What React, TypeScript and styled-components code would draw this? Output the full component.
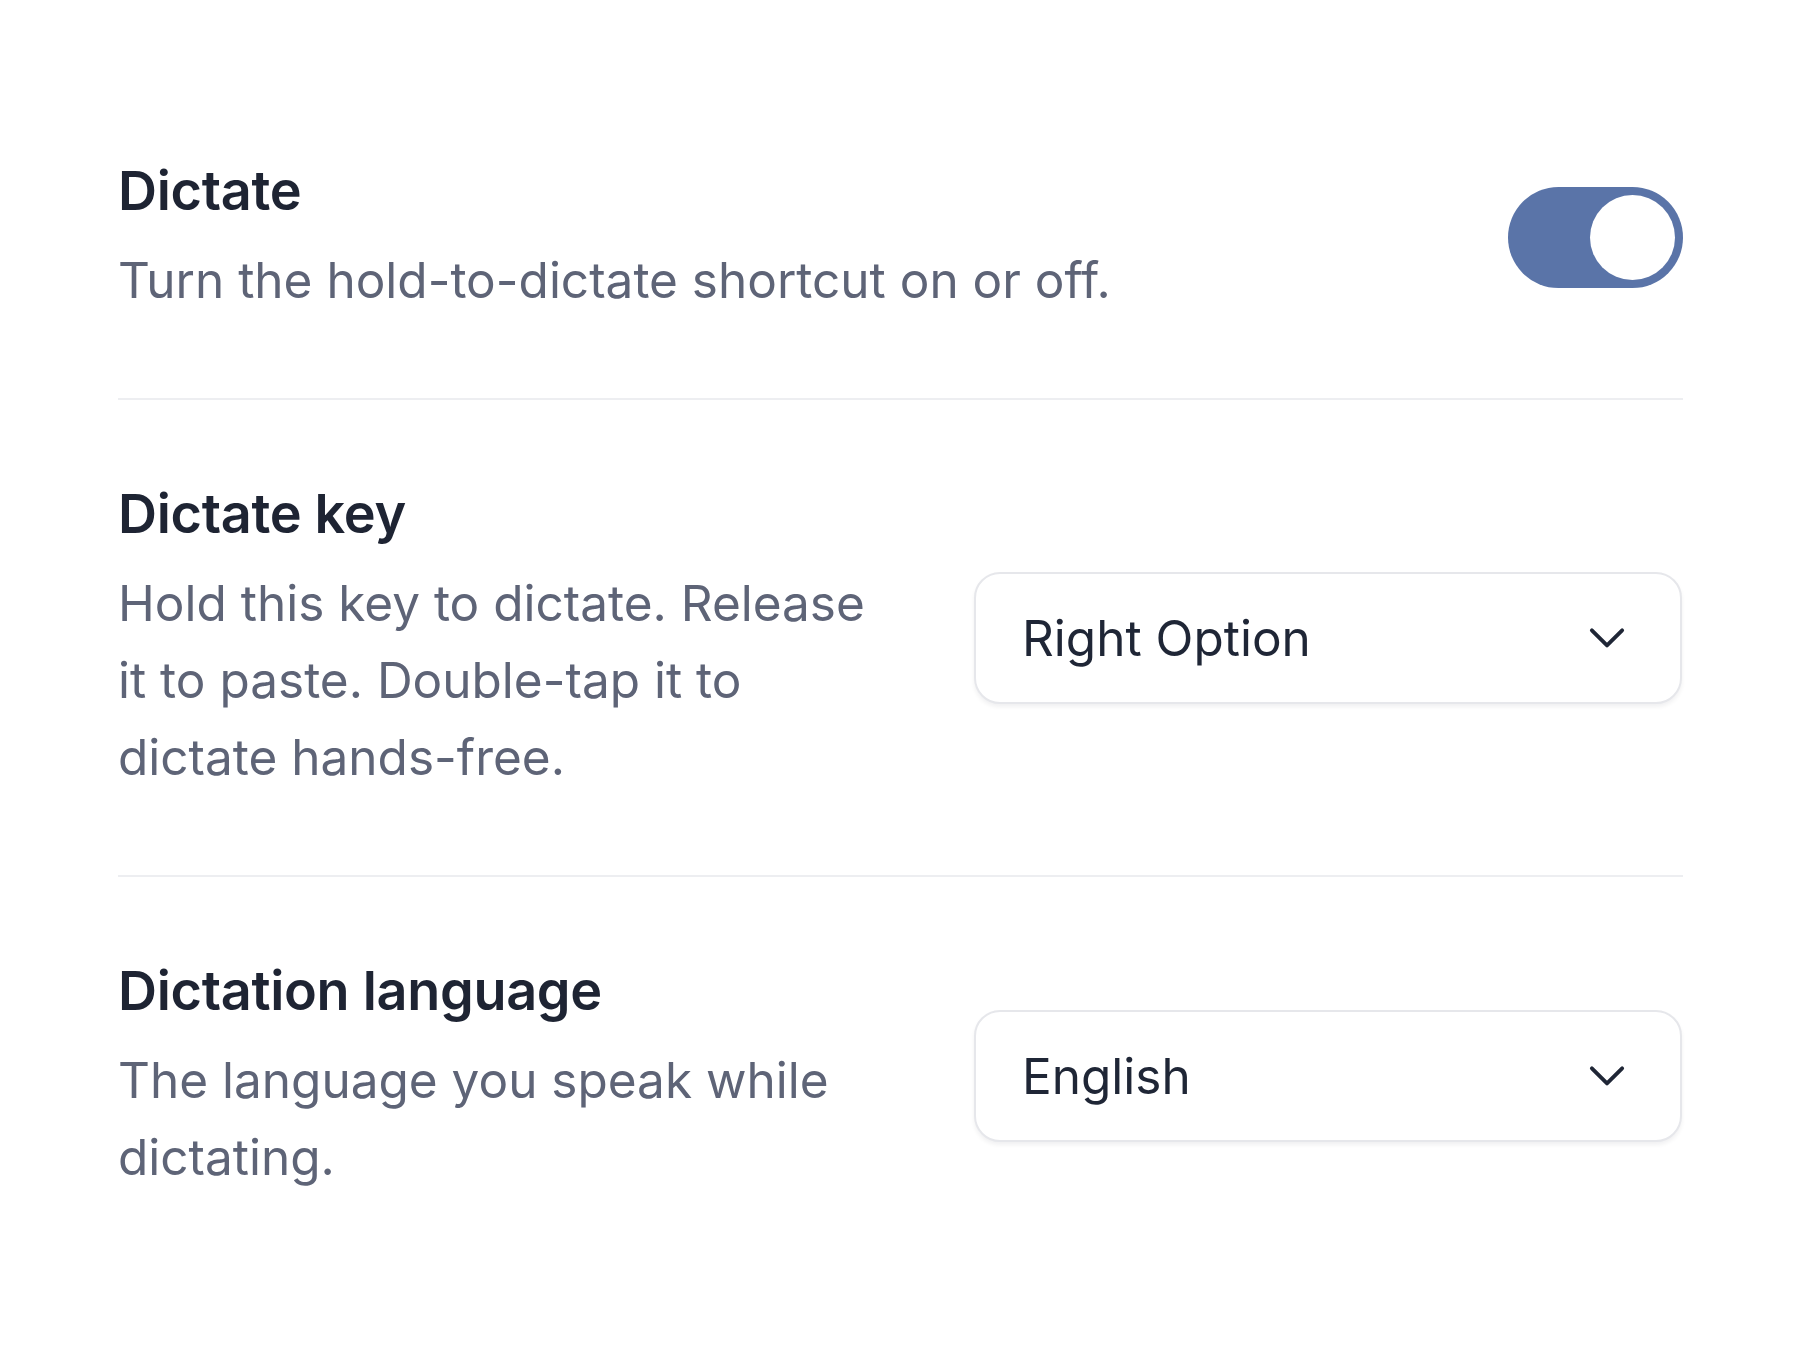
import React, { useState } from "react";
import styled, { createGlobalStyle } from "styled-components";

const Global = createGlobalStyle`
  html, body { margin: 0; padding: 0; background: #ffffff; }
  body { font-family: Inter, "Noto Sans", "Liberation Sans", sans-serif; -webkit-font-smoothing: antialiased; }
`;

const Page = styled.div`
  width: 1800px;
  min-height: 1350px;
  box-sizing: border-box;
  padding: 156px 117px 0 118px;
  display: flex;
  flex-direction: column;
`;

const Row = styled.div<{ $divider?: boolean }>`
  display: flex;
  align-items: center;
  gap: 96px;
  padding: 79px 0;
  border-bottom: ${(p) => (p.$divider ? "2px solid #EDEEF1" : "none")};
  &:first-child { padding-top: 0; }
`;

const Info = styled.div<{ $wide?: boolean }>`
  flex: 1;
  display: flex;
  flex-direction: column;
  gap: 16px;
  max-width: ${(p) => (p.$wide ? "none" : "760px")};
`;

const Title = styled.div`
  font-size: 54px;
  line-height: 70px;
  font-weight: 600;
  color: #1E2433;
  letter-spacing: -0.3px;
`;

const Desc = styled.div`
  font-size: 49.5px;
  line-height: 77px;
  font-weight: 400;
  color: #5E6477;
`;

const Track = styled.button<{ $on: boolean }>`
  width: 175px;
  height: 101px;
  border-radius: 51px;
  border: none;
  padding: 8px;
  box-sizing: border-box;
  background: ${(p) => (p.$on ? "#5A74A8" : "#D1D5DB")};
  display: flex;
  justify-content: ${(p) => (p.$on ? "flex-end" : "flex-start")};
  cursor: pointer;
  flex-shrink: 0;
`;

const Knob = styled.span`
  width: 85px;
  height: 85px;
  border-radius: 50%;
  background: #ffffff;
`;

const Select = styled.div`
  width: 708px;
  height: 132px;
  box-sizing: border-box;
  flex-shrink: 0;
  border: 2px solid #E6E7EB;
  border-radius: 26px;
  box-shadow: 0 3px 4px rgba(17, 24, 39, 0.06);
  background: #ffffff;
  display: flex;
  align-items: center;
  justify-content: space-between;
  padding: 0 40px 0 46px;
  font-size: 49.5px;
  color: #1F2636;
`;

const Chevron = () => (
  <svg width="66" height="66" viewBox="0 0 24 24" fill="none" stroke="#1F2636" strokeWidth="1.4" strokeLinecap="round" strokeLinejoin="round">
    <path d="m6.5 9.2 5.5 5.5 5.5-5.5" />
  </svg>
);

export default function App() {
  const [on, setOn] = useState(true);
  return (
    <>
      <Global />
      <Page>
        <Row $divider>
          <Info $wide>
            <Title>Dictate</Title>
            <Desc>Turn the hold-to-dictate shortcut on or off.</Desc>
          </Info>
          <Track $on={on} onClick={() => setOn(!on)} aria-label="Dictate">
            <Knob />
          </Track>
        </Row>
        <Row $divider>
          <Info>
            <Title>Dictate key</Title>
            <Desc>Hold this key to dictate. Release it to paste. Double-tap it to dictate hands-free.</Desc>
          </Info>
          <Select>
            <span>Right Option</span>
            <Chevron />
          </Select>
        </Row>
        <Row>
          <Info>
            <Title>Dictation language</Title>
            <Desc>The language you speak while dictating.</Desc>
          </Info>
          <Select>
            <span>English</span>
            <Chevron />
          </Select>
        </Row>
      </Page>
    </>
  );
}
